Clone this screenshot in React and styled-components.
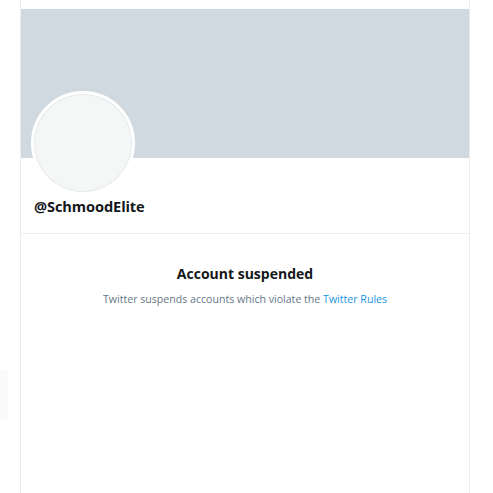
import React from 'react'
import styled, { createGlobalStyle } from 'styled-components'

const GlobalStyle = createGlobalStyle`
  html, body {
    margin: 0;
    padding: 0;
    background: #fff;
  }
  body {
    font-family: 'Open Sans', 'Noto Sans', 'Liberation Sans', sans-serif;
    color: #14171a;
  }
`

const Page = styled.div`
  display: flex;
  min-height: 493px;
`

const Gutter = styled.div`
  width: 20px;
  flex-shrink: 0;
  padding-top: 370px;
`

const GhostTab = styled.div`
  width: 8px;
  height: 50px;
  background: #fafafa;
  border-radius: 0 4px 4px 0;
`

const Column = styled.main`
  width: 448px;
  flex-shrink: 0;
  border-left: 1px solid #e9edf0;
  border-right: 1px solid #e9edf0;
  min-height: 493px;
`

const Banner = styled.div`
  margin-top: 9px;
  height: 149px;
  background: #d0d9df;
`

const ProfileHead = styled.div`
  padding: 0 10px 17px;
  border-bottom: 1px solid #e9edf0;
`

const Avatar = styled.div`
  width: 98px;
  height: 98px;
  margin-top: -67px;
  border-radius: 50%;
  border: 3px solid #fff;
  background: #f5f7f7;
  box-shadow: inset 0 0 0 1px #e6eaea;
`

const Handle = styled.div`
  margin: 1px 0 0 3px;
  font-size: 14.6px;
  font-weight: 700;
  line-height: 20px;
  letter-spacing: -0.1px;
`

const Notice = styled.section`
  display: flex;
  flex-direction: column;
  align-items: center;
  padding-top: 29px;
  text-align: center;
`

const NoticeTitle = styled.h2`
  margin: 0;
  font-size: 14px;
  font-weight: 700;
  line-height: 22px;
`

const NoticeText = styled.p`
  margin: 6px 0 0;
  font-size: 10.6px;
  line-height: 16px;
  color: #657786;
`

const RulesLink = styled.a`
  color: #1b95e0;
  text-decoration: none;
`

export default function App() {
  return (
    <>
      <GlobalStyle />
      <Page>
        <Gutter>
          <GhostTab />
        </Gutter>
        <Column>
          <Banner />
          <ProfileHead>
            <Avatar />
            <Handle>@SchmoodElite</Handle>
          </ProfileHead>
          <Notice>
            <NoticeTitle>Account suspended</NoticeTitle>
            <NoticeText>
              Twitter suspends accounts which violate the <RulesLink href="#">Twitter Rules</RulesLink>
            </NoticeText>
          </Notice>
        </Column>
      </Page>
    </>
  )
}
